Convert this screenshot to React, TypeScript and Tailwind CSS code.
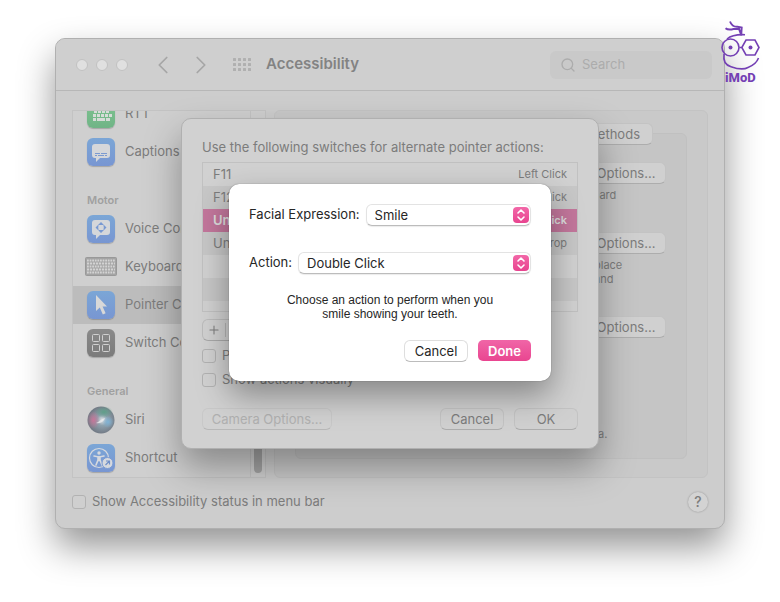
import type { ReactNode } from "react";
import { ChevronLeft, ChevronRight, Search, Plus } from "lucide-react";
import clsx from "clsx";

const blueTile = "bg-linear-to-b from-[#7ba6d6] to-[#7896d2]";

function Tile({ className, children }: { className?: string; children: ReactNode }) {
    return (
        <span className={clsx("flex h-7 w-7 items-center justify-center rounded-md shadow-[0_1px_1px_rgba(0,0,0,0.2)]", className)}>
            {children}
        </span>
    );
}

function RttIcon() {
    return (
        <Tile className="bg-linear-to-b from-[#7fc492] to-[#70b486]">
            <svg width="28" height="28" viewBox="0 0 28 28" fill="#d6dcd8">
                {[6, 10, 14, 18].map((x) => <rect key={x} x={x + 1} y="10" width="3" height="3" />)}
                {[5, 9, 13, 17, 21].map((x) => <rect key={x} x={x + 1} y="14" width="3" height="3" />)}
                <path d="M6 18h3v3h-3zM10 18h8v3h-8zM19 18h4v3h-4z" />
            </svg>
        </Tile>
    );
}

function CaptionsIcon() {
    return (
        <Tile className={blueTile}>
            <svg width="28" height="28" viewBox="0 0 28 28">
                <path d="M8 6h12a3 3 0 0 1 3 3v8a3 3 0 0 1-3 3h-7l-4 4v-4H8a3 3 0 0 1-3-3V9a3 3 0 0 1 3-3z" fill="#d5d7da" />
                <path d="M8 15.500h5m1 0h6M8 17.500h2m1 0h6m1 0h2" stroke="#7b9ad0" />
            </svg>
        </Tile>
    );
}

function VoiceIcon() {
    return (
        <Tile className={blueTile}>
            <svg width="28" height="28" viewBox="0 0 28 28">
                <path d="M8 5h12a3 3 0 0 1 3 3v9a3 3 0 0 1-3 3h-7l-4 4v-4H8a3 3 0 0 1-3-3V8a3 3 0 0 1 3-3z" fill="#d5d7da" />
                <path d="M14 7l3 3h-6zM14 18l3-3h-6zM8.500 12.500l3-3v6zM19.500 12.500l-3-3v6z" fill="#7899d2" />
                <circle cx="14" cy="12.500" r="2.500" fill="#d5d7da" />
            </svg>
        </Tile>
    );
}

function KeyboardIcon() {
    return (
        <svg width="32" height="20" viewBox="0 0 32 20">
            <rect x="0.5" y="0.5" width="31" height="18" rx="1" fill="#a4a4a4" stroke="#999" />
            {[3, 6, 9, 12, 15].map((y, i) => (
                <path key={y} d={`M2 ${y}.500h28`} stroke="#d3d3d3" strokeWidth="2" strokeDasharray={i % 2 ? "2.200 .8" : "1.800 .8"} />
            ))}
        </svg>
    );
}

function PointerIcon() {
    return (
        <Tile className={blueTile}>
            <svg width="28" height="28" viewBox="0 0 28 28">
                <path d="M9 4v16l3.800-3.500 3 7 2.800-1.200-3-6.800H20z" fill="#d8d8d8" />
            </svg>
        </Tile>
    );
}

function SwitchIcon() {
    return (
        <Tile className="bg-linear-to-b from-[#8a8a8a] to-[#7b7b7b]">
            <svg width="28" height="28" viewBox="0 0 28 28" fill="none" stroke="#d0d0d0">
                <rect x="5.500" y="5.500" width="7" height="7" rx="1" />
                <rect x="15.500" y="5.500" width="7" height="7" rx="1" />
                <rect x="5.500" y="15.500" width="7" height="7" rx="1" />
                <rect x="15.500" y="15.500" width="7" height="7" rx="1" />
            </svg>
        </Tile>
    );
}

function SiriIcon() {
    return (
        <svg width="28" height="28" viewBox="0 0 28 28">
            <defs>
                <radialGradient id="orb" cx="0.55" cy="0.5" r="0.5">
                    <stop offset="0" stopColor="#dfe3e6" />
                    <stop offset="0.4" stopColor="#8fa2ae" />
                    <stop offset="1" stopColor="#737b86" />
                </radialGradient>
                <radialGradient id="orbPink">
                    <stop offset="0" stopColor="#c77699" />
                    <stop offset="1" stopColor="#c77699" stopOpacity="0" />
                </radialGradient>
                <radialGradient id="orbGreen">
                    <stop offset="0" stopColor="#5f9f89" />
                    <stop offset="1" stopColor="#5f9f89" stopOpacity="0" />
                </radialGradient>
                <radialGradient id="orbBlue">
                    <stop offset="0" stopColor="#7fb3d6" />
                    <stop offset="1" stopColor="#7fb3d6" stopOpacity="0" />
                </radialGradient>
            </defs>
            <circle cx="14" cy="14" r="13.500" fill="url(#orb)" />
            <ellipse cx="17" cy="6" rx="9" ry="6" fill="url(#orbGreen)" />
            <ellipse cx="6.500" cy="14" rx="6.500" ry="9" fill="url(#orbPink)" />
            <ellipse cx="21" cy="16" rx="6" ry="6" fill="url(#orbBlue)" />
            <path d="M9 17c3-1 5-4 9-5-1 3-4 6-9 5z" fill="#e8eaec" opacity="0.8" />
        </svg>
    );
}

function ShortcutIcon() {
    return (
        <Tile className={blueTile}>
            <svg width="28" height="28" viewBox="0 0 28 28" fill="none" stroke="#d6d9de">
                <circle cx="12" cy="14" r="9.500" strokeWidth="1.200" />
                <circle cx="12" cy="9" r="1.700" fill="#d6d9de" stroke="none" />
                <path d="M7 12l4 .8v3.200l-2 5M17 12l-4 .8v3.200l2 5M12 12.500v4" strokeWidth="1.600" strokeLinecap="round" />
                <circle cx="20.500" cy="19" r="5.500" fill="#d6d9de" stroke="#7b9bd3" />
                <path d="M18.500 21l4-4m-3.500 0h3.500v3.500" stroke="#6f8fc8" strokeWidth="1.200" />
            </svg>
        </Tile>
    );
}

function Logo() {
    return (
        <svg className="absolute top-5 right-[18px]" width="42" height="64" viewBox="0 0 42 64" fill="none" stroke="#7440b4" strokeWidth="1.600" role="img" aria-label="iMoD">
            <path d="M10 1.500c1.500 4 4 5.500 7.500 5.300l4.200.7-.5 8M5.500 8.200c2.500 2 5 1.600 8 .8l5.500-.2 2.200 6" strokeWidth="1.900" />
            <path d="M7 19c4-3.500 9-4.700 18-4.300" />
            <circle cx="10.500" cy="27.500" r="8.500" />
            <path d="M19.500 27.500h2M26 20h9l4 7.500-4 7.500h-9l-4.200-7.500zM4 34c-1 7 1 11 7 12.700 7 2.500 13 3 17 .8 5-2 8.500-4 10.500-9.500" />
            <circle cx="10.500" cy="27.500" r="2" fill="#7440b4" stroke="none" />
            <circle cx="30.500" cy="27.500" r="2" fill="#7440b4" stroke="none" />
            <text x="5" y="62" fill="#7440b4" stroke="none" fontFamily="Roboto, sans-serif" fontWeight="800" fontSize="13">iMoD</text>
        </svg>
    );
}

type Item = { label: string; icon: ReactNode; active?: boolean };

const groups: { title?: string; items: Item[] }[] = [
    {
        items: [
            { label: "RTT", icon: <RttIcon /> },
            { label: "Captions", icon: <CaptionsIcon /> },
        ],
    },
    {
        title: "Motor",
        items: [
            { label: "Voice Control", icon: <VoiceIcon /> },
            { label: "Keyboard", icon: <KeyboardIcon /> },
            { label: "Pointer Control", icon: <PointerIcon />, active: true },
            { label: "Switch Control", icon: <SwitchIcon /> },
        ],
    },
    {
        title: "General",
        items: [
            { label: "Siri", icon: <SiriIcon /> },
            { label: "Shortcut", icon: <ShortcutIcon /> },
        ],
    },
];

const switches = [
    { name: "F11", action: "Left Click" },
    { name: "F12", action: "Right Click" },
    { name: "Unassigned", action: "Double Click", selected: true },
    { name: "Unassigned", action: "Drag and Drop" },
    { name: "", action: "" },
    { name: "", action: "" },
];

function Checkbox({ label }: { label: string }) {
    return (
        <label className="flex h-6 items-center gap-1.5">
            <input type="checkbox" className="h-3.5 w-3.5 appearance-none rounded-[3px] border border-[#b2b2b2] bg-[#d0d0d0]/60" />
            {label}
        </label>
    );
}

function DimButton({ className, children, disabled }: { className?: string; children: ReactNode; disabled?: boolean }) {
    return (
        <button
            disabled={disabled}
            className={clsx(
                "h-[22px] rounded-md border border-[#c3c3c3] border-b-[#adadad] bg-[#d0d0d0] text-center leading-5 disabled:border-[#c8c8c8] disabled:border-b-[#b8b8b8] disabled:bg-transparent disabled:text-[#b0b0b0]",
                className
            )}
        >
            {children}
        </button>
    );
}

function Picker({ id, label, options }: { id: string; label: string; options: string[] }) {
    return (
        <div className="flex items-center gap-1.5">
            <label htmlFor={id}>{label}</label>
            <div className="relative flex-1">
                <select id={id} className="block h-[22px] w-full appearance-none rounded-md border border-[#e3e3e3] border-b-[#bcbcbc] bg-white pl-2 leading-5 shadow-[0_1px_1px_rgba(0,0,0,0.08)]">
                    {options.map((o) => <option key={o}>{o}</option>)}
                </select>
                <span className="pointer-events-none absolute top-[3px] right-[2px] flex h-4 w-4 items-center justify-center rounded-sm bg-linear-to-b from-[#f267a8] to-[#e8438f]">
                    <svg width="16" height="16" viewBox="0 0 16 16" fill="none" stroke="#fff" strokeWidth="1.600" strokeLinecap="round" strokeLinejoin="round">
                        <path d="M5 6l3-3 3 3M5 10l3 3 3-3" />
                    </svg>
                </span>
            </div>
        </div>
    );
}

function Toolbar() {
    return (
        <header className="flex h-[52px] items-center border-b border-[#b7b7b7] bg-[#cfcfcf] pr-3 pl-5">
            <div className="flex gap-2">
                {[0, 1, 2].map((i) => <span key={i} className="h-3 w-3 rounded-full border border-[#c2c2c2] bg-[#e0e0e0]" />)}
            </div>
            <div className="ml-5 flex gap-2 text-[#a6a6a6]">
                <button aria-label="Back"><ChevronLeft size={30} strokeWidth={1.4} /></button>
                <button aria-label="Forward"><ChevronRight size={30} strokeWidth={1.4} /></button>
            </div>
            <button aria-label="Show All" className="ml-4">
                <svg width="20" height="16" viewBox="0 0 20 16" fill="#b0b0b0">
                    {[1, 6, 11].map((y) => [1, 6, 11, 16].map((x) => <rect key={`${x}-${y}`} x={x} y={y} width="3" height="3" rx="0.500" />))}
                </svg>
            </button>
            <h1 className="ml-3.5 text-[15px] font-semibold text-[#838383]">Accessibility</h1>
            <label className="ml-auto flex h-7 w-[162px] items-center gap-1.5 rounded-md bg-[#c9c9c9] px-2.5 text-[#acacac]">
                <Search size={16} strokeWidth={2} className="shrink-0" />
                <input type="search" aria-label="Search" placeholder="Search" className="w-full min-w-0 bg-transparent placeholder:text-[#acacac]" />
            </label>
        </header>
    );
}

function Sidebar() {
    return (
        <aside className="flex w-[194px] border border-[#c3c3c3] bg-[#cfcfcf]">
            <nav className="flex h-[366px] flex-1 flex-col justify-end overflow-hidden">
                {groups.map((g, i) => (
                    <div key={i}>
                        {g.title && <h2 className="h-[39px] px-3.5 pt-[19px] text-[11px] leading-5 font-semibold text-[#a0a0a0]">{g.title}</h2>}
                        {g.items.map((item) => (
                            <a key={item.label} href="#" className={clsx("flex h-[38px] items-center gap-2 px-3 whitespace-nowrap", item.active && "bg-[#bcbcbc]")}>
                                <span className="flex w-8 shrink-0 justify-center">{item.icon}</span>
                                {item.label}
                            </a>
                        ))}
                    </div>
                ))}
            </nav>
            <div className="flex w-[15px] items-end justify-center border-l border-[#c3c3c3] pb-1">
                <span className="h-32 w-2 rounded-full bg-[#a3a3a3]" />
            </div>
        </aside>
    );
}

function Option({ className, children }: { className?: string; children: ReactNode }) {
    return (
        <div className={clsx("flex w-20 flex-col", className)}>
            <DimButton className="w-full">Options...</DimButton>
            <p className="pt-1 pl-2 text-[11px] leading-3.5">{children}</p>
        </div>
    );
}

function Panel() {
    return (
        <main className="flex flex-1 flex-col rounded-md border border-[#c3c3c3] bg-[#c9c9c9] px-5 pt-3 pb-[18px]">
            <div className="z-10 flex justify-end pr-[34px]">
                <DimButton className="px-3">Methods</DimButton>
            </div>
            <section className="-mt-3 flex flex-1 flex-col items-end rounded-md border border-[#c0c0c0] bg-[#c5c5c5] pt-7 pr-5">
                <Option className="h-[70px]"><span className="-ml-2">board</span></Option>
                <Option className="h-[84px]">place<br />and</Option>
                <Option className="h-[110px]">{null}</Option>
                <p className="w-[68px] text-[11px] leading-4">a.</p>
            </section>
        </main>
    );
}

function SwitchesSheet() {
    return (
        <section className="w-[418px] rounded-[10px] border border-[#b0b0b0] bg-[#d1d1d1] px-5 pt-[19px] pb-[18px] shadow-[0_18px_36px_rgba(0,0,0,0.34)]">
            <h2 className="leading-[18px]">Use the following switches for alternate pointer actions:</h2>
            <div className="mt-1.5 border border-[#c1c1c1] pb-2.5">
                <table className="w-full">
                    <tbody>
                        {switches.map((s, i) => (
                            <tr key={i} className={clsx("h-[23px]", s.selected ? "bg-[#c3779c] font-semibold text-[#dedede]" : i % 2 === 1 && "bg-[#c7c7c7]")}>
                                <td className="pl-2.5">{s.name}</td>
                                <td className="pr-2.5 text-right text-[11px]">{s.action}</td>
                            </tr>
                        ))}
                    </tbody>
                </table>
            </div>
            <div className="mt-[7px] flex h-[22px] w-12 items-center rounded-md border border-[#bcbcbc] border-b-[#a9a9a9]">
                <button aria-label="Add" className="flex h-3.5 w-[23px] items-center justify-center border-r border-[#b4b4b4]">
                    <Plus size={14} strokeWidth={1.75} className="shrink-0" />
                </button>
            </div>
            <div className="mt-[3px]">
                <Checkbox label="Pause" />
                <Checkbox label="Show actions visually" />
            </div>
            <div className="mt-4 flex gap-2.5">
                <DimButton disabled className="mr-auto w-[130px]">Camera Options...</DimButton>
                <DimButton className="w-16">Cancel</DimButton>
                <DimButton className="w-16">OK</DimButton>
            </div>
        </section>
    );
}

function ExpressionDialog() {
    return (
        <section role="dialog" className="w-[322px] rounded-[10px] bg-white px-5 pt-5 pb-[19px] text-[#262626] shadow-[0_0_1px_rgba(0,0,0,0.6),0_14px_32px_rgba(0,0,0,0.36)]">
            <div className="flex flex-col gap-[26px]">
                <Picker id="expression" label="Facial Expression:" options={["Smile"]} />
                <Picker id="action" label="Action:" options={["Double Click"]} />
            </div>
            <p className="mx-auto mt-[19px] w-[230px] text-center font-['Liberation_Sans',Arial,sans-serif] text-[12px] leading-3.5">
                Choose an action to perform when you smile showing your teeth.
            </p>
            <div className="mt-[19px] flex justify-end gap-2.5">
                <button className="h-[22px] w-16 rounded-md border border-[#dedede] border-b-[#bcbcbc] bg-white leading-5">Cancel</button>
                <button className="h-[21px] w-[53px] rounded-[5px] bg-linear-to-b from-[#f065a7] to-[#e94590] leading-5 font-semibold text-white">Done</button>
            </div>
        </section>
    );
}

export default function App() {
    return (
        <div className="relative min-h-screen bg-white px-[55px] pt-[38px] pb-[73px] font-[Inter,'Liberation_Sans',sans-serif] text-[13px] text-[#7c7c7c]">
            <div className="relative overflow-hidden rounded-[10px] border border-[#b0b0b0] bg-[#cdcdcd] shadow-[0_18px_36px_rgba(0,0,0,0.42)]">
                <Toolbar />
                <div className="flex gap-2 px-4 pt-[19px]">
                    <Sidebar />
                    <Panel />
                </div>
                <footer className="flex h-[50px] items-center justify-between px-4 pb-0.5">
                    <Checkbox label="Show Accessibility status in menu bar" />
                    <button aria-label="Help" className="h-5 w-5 rounded-full bg-[#d3d3d3] text-[14px] leading-5 font-medium shadow-[0_0_2px_rgba(0,0,0,0.3)]">?</button>
                </footer>
                <div className="absolute inset-x-0 top-[79px] z-20 flex justify-center">
                    <SwitchesSheet />
                </div>
                <div className="absolute inset-x-0 top-[145px] z-30 flex justify-center">
                    <ExpressionDialog />
                </div>
            </div>
            <Logo />
        </div>
    );
}
